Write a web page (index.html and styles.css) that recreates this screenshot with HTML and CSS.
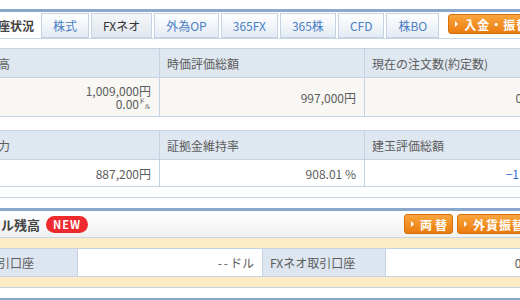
FILE: index.html
```html
<!DOCTYPE html>
<html>
<head>
    <meta charset="utf-8">
    <title>口座状況</title>
    <link rel="stylesheet" href="styles.css">
</head>
<body>
<div class="page">
    <div class="panel">
        <div class="panel-head">
            <h2 class="panel-title">総合口座状況</h2>
            <ul class="tabs">
                <li class="tab">株式</li>
                <li class="tab active">FXネオ</li>
                <li class="tab">外為OP</li>
                <li class="tab">365FX</li>
                <li class="tab">365株</li>
                <li class="tab">CFD</li>
                <li class="tab">株BO</li>
            </ul>
            <a class="btn-orange btn-deposit">入金・振替</a>
        </div>
        <div class="panel-body">
            <table class="summary">
                <tr>
                    <th>現金残高</th>
                    <th>時価評価総額</th>
                    <th>現在の注文数(約定数)</th>
                </tr>
                <tr class="shaded">
                    <td>1,009,000円<br>0.00㌦</td>
                    <td>997,000円</td>
                    <td>0件(0件)</td>
                </tr>
            </table>
            <table class="summary">
                <tr>
                    <th>買付余力</th>
                    <th>証拠金維持率</th>
                    <th>建玉評価総額</th>
                </tr>
                <tr>
                    <td>887,200円</td>
                    <td>908.01 %</td>
                    <td class="minus">−11,800円</td>
                </tr>
            </table>
        </div>
    </div>

    <div class="panel">
        <div class="panel-head panel-head-plain">
            <h2 class="panel-title title-large">外貨ドル残高</h2>
            <span class="badge-new">NEW</span>
            <div class="head-buttons">
                <a class="btn-orange btn-exchange">両替</a>
                <a class="btn-orange btn-transfer">外貨振替</a>
            </div>
        </div>
        <div class="panel-body cream">
            <table class="balance">
                <colgroup>
                    <col class="col-label">
                    <col class="col-value">
                    <col class="col-label">
                    <col class="col-value">
                </colgroup>
                <tr>
                    <th>証券取引口座</th>
                    <td><span class="dash">--</span>ドル</td>
                    <th>FXネオ取引口座</th>
                    <td>0.00ドル</td>
                </tr>
            </table>
        </div>
    </div>

    <div class="panel panel-next"></div>
</div>
</body>
</html>
```

FILE: styles.css
```css
body {
    margin: 0;
    font-family: "Noto Sans CJK JP", "Noto Sans", sans-serif;
    font-size: 12px;
    color: #5c5c5c;
    background-color: #fff;
    overflow: hidden;
}

.page {
    width: 616px;
    margin-left: -46px;
    padding-top: 9px;
}

/* Panels */
.panel {
    border-top: 3px solid #8aa7cc;
    border-bottom: 1px solid #c5d4e5;
    margin-bottom: 10px;
}

.panel-head {
    display: flex;
    align-items: flex-end;
    height: 26px;
    padding-left: 8px;
    border-bottom: 1px solid #c9d6e4;
    background-color: #fff;
}

.panel-head-plain {
    align-items: center;
    background: linear-gradient(#fff, #f1f1f1);
}

.panel-title {
    align-self: center;
    margin: 0 7px 0 0;
    font-size: 12px;
    font-weight: bold;
    color: #444;
}

.title-large {
    font-size: 13px;
    margin-right: 6px;
}

/* Tabs */
.tabs {
    display: flex;
    gap: 2px;
    list-style: none;
    margin: 0;
    padding: 0;
}

.tab {
    height: 23px;
    line-height: 23px;
    padding: 0 11px;
    border: 1px solid #c4d2e3;
    background: linear-gradient(#fff, #e4ebf4);
    color: #4a7fc4;
}

.tab.active {
    background: linear-gradient(#f4f6f9, #e1e7ee);
    color: #333;
}

/* Orange buttons */
.btn-orange {
    display: flex;
    align-items: center;
    height: 18px;
    padding: 0 8px 0 6px;
    border: 1px solid #d5700a;
    border-radius: 3px;
    background: linear-gradient(#f9a63e, #ea7c0e);
    color: #fff;
    font-weight: bold;
    font-size: 12px;
    letter-spacing: 1px;
    white-space: nowrap;
}

.btn-orange::before {
    content: "";
    border-left: 3px solid #fff;
    border-top: 3px solid transparent;
    border-bottom: 3px solid transparent;
    margin-right: 6px;
}

.btn-deposit {
    align-self: flex-start;
    margin: 2px 0 0 9px;
}

.head-buttons {
    display: flex;
    gap: 4px;
    margin-left: auto;
    padding-right: 38px;
}

.btn-exchange {
    width: 33px;
    letter-spacing: 3px;
}

.btn-transfer {
    width: 59px;
}

.badge-new {
    height: 17px;
    line-height: 17px;
    padding: 0 7px;
    border-radius: 9px;
    background-color: #ef2a2f;
    color: #fff;
    font-size: 11px;
    font-weight: bold;
    letter-spacing: 1px;
}

/* Summary tables */
.panel-body {
    padding: 9px 0 10px;
}

.summary {
    width: 100%;
    border-collapse: collapse;
    table-layout: fixed;
    margin-bottom: 13px;
}

.summary:last-child {
    margin-bottom: 0;
}

.summary th,
.summary td {
    border: 1px solid #c5d2e1;
    padding: 0 8px 0 7px;
}

.summary th {
    height: 28px;
    background-color: #dfe7f0;
    font-weight: normal;
    text-align: left;
}

.summary td {
    height: 26px;
    text-align: right;
    line-height: 13px;
    background-color: #fff;
}

.summary .shaded td {
    height: 38px;
    background-color: #f8f7f4;
}

.summary .minus {
    color: #2f6fd0;
}

/* Foreign currency balance */
.cream {
    padding: 10px 0;
    background-color: #fdebc5;
}

.balance {
    width: 100%;
    border-collapse: collapse;
    table-layout: fixed;
}

.col-label {
    width: 123px;
}

.col-value {
    width: 185px;
}

.balance th,
.balance td {
    height: 27px;
    border: 1px solid #c5d2e1;
    padding: 0 8px 0 7px;
}

.balance th {
    background-color: #dde6f0;
    font-weight: normal;
    text-align: left;
}

.balance td {
    background-color: #fff;
    text-align: right;
}

.dash {
    letter-spacing: 2px;
}

.panel-next {
    height: 20px;
    border-bottom: none;
}
```
